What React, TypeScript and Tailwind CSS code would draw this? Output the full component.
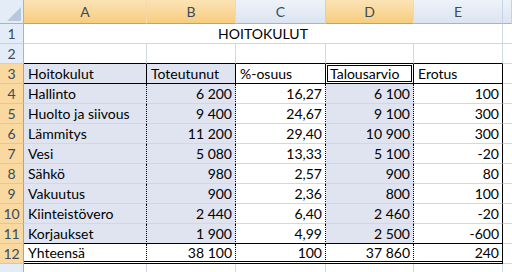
import React from 'react';

type Row = [string, string, string, string, string];

const rows: Row[] = [
  ['Hallinto', '6 200', '16,27', '6 100', '100'],
  ['Huolto ja siivous', '9 400', '24,67', '9 100', '300'],
  ['Lämmitys', '11 200', '29,40', '10 900', '300'],
  ['Vesi', '5 080', '13,33', '5 100', '-20'],
  ['Sähkö', '980', '2,57', '900', '80'],
  ['Vakuutus', '900', '2,36', '800', '100'],
  ['Kiinteistövero', '2 440', '6,40', '2 460', '-20'],
  ['Korjaukset', '1 900', '4,99', '2 500', '-600'],
];

const colHead = 'flex items-center justify-center border-r border-b border-r-[#c5d3e4] border-b-[#9eb6ce] bg-gradient-to-b from-[#eef3f9] to-[#dbe4f0] text-[#3b4a5c]';
const colHeadSel = 'flex items-center justify-center border-r border-b border-r-[#f5d9a8] border-b-[#f29436] bg-gradient-to-b from-[#fbe3b5] to-[#f7cd7e] text-[#3b4a5c]';
const rowHead = 'flex items-center justify-center border-r border-b border-r-[#9eb6ce] border-b-[#c5d3e4] bg-[#e4ecf7] text-[#3b4a5c]';
const rowHeadSel = 'flex items-center justify-center border-r border-b border-r-[#f29436] border-b-[#f3c47a] bg-[#f9d99f] text-[#3b4a5c]';

const App = () => {
  return (
    <div
      className="w-[512px] h-[272px] overflow-hidden bg-white text-[14px] leading-none text-black"
      style={{ fontFamily: 'Lato, "Open Sans", sans-serif' }}
    >
      <div className="grid grid-cols-[24px_123px_89px_90px_88px_89px_1fr] grid-rows-[24px_repeat(12,20px)_1fr] h-full">
        {/* column headers */}
        <div className="relative border-r border-b border-r-[#9eb6ce] border-b-[#9eb6ce] bg-[#e4ecf7]">
          <svg className="absolute right-[2px] bottom-[2px]" width="14" height="14" viewBox="0 0 14 14">
            <polygon points="14,0 14,14 0,14" fill="#b7c8dc" />
          </svg>
        </div>
        <div className={colHeadSel}>A</div>
        <div className={colHeadSel}>B</div>
        <div className={colHead}>C</div>
        <div className={colHeadSel}>D</div>
        <div className={colHead}>E</div>
        <div className={colHead}></div>

        {/* row 1 */}
        <div className={rowHead}>1</div>
        <div className="col-span-5 flex items-center justify-center border-r border-b border-[#d0d7e5]">HOITOKULUT</div>
        <div className="border-b border-[#d0d7e5]"></div>

        {/* row 2 */}
        <div className={rowHead}>2</div>
        <div className="border-r border-b border-r-[#d0d7e5] border-b-black"></div>
        <div className="border-r border-b border-r-[#d0d7e5] border-b-black"></div>
        <div className="border-r border-b border-r-[#d0d7e5] border-b-black"></div>
        <div className="border-r border-b border-r-[#d0d7e5] border-b-black"></div>
        <div className="border-r border-b border-r-[#d0d7e5] border-b-black"></div>
        <div className="border-b border-[#d0d7e5]"></div>

        {/* row 3 */}
        <div className={rowHeadSel}>3</div>
        <div className="flex items-center px-[4px] border-r border-b border-black bg-[#dfe4f0]">Hoitokulut</div>
        <div className="flex items-center px-[4px] border-r border-b border-black bg-[#dfe4f0]">Toteutunut</div>
        <div className="flex items-center px-[4px] border-r border-b border-black">%-osuus</div>
        <div className="flex items-center px-[4px] border-r border-b border-black shadow-[inset_0_0_0_1px_white,inset_0_0_0_2px_black]">Talousarvio</div>
        <div className="flex items-center px-[4px] border-r border-b border-black">Erotus</div>
        <div className="border-b border-[#d0d7e5]"></div>

        {/* rows 4-11 */}
        {rows.map((r, i) => {
          const last = i === rows.length - 1;
          const bb = last ? 'border-b-black' : 'border-b-[#d0d7e5]';
          return (
            <React.Fragment key={r[0]}>
              <div className={rowHeadSel}>{i + 4}</div>
              <div className={`flex items-center px-[4px] border-r border-b border-r-black [border-right-style:dotted] bg-[#dfe4f0] ${bb}`}>{r[0]}</div>
              <div className={`flex items-center justify-end px-[3px] border-r border-b border-r-black [border-right-style:dotted] bg-[#dfe4f0] ${bb}`}>{r[1]}</div>
              <div className={`flex items-center justify-end px-[3px] border-r border-b border-r-black [border-right-style:dotted] ${bb}`}>{r[2]}</div>
              <div className={`flex items-center justify-end px-[3px] border-r border-b border-r-black [border-right-style:dotted] bg-[#dfe4f0] ${bb}`}>{r[3]}</div>
              <div className={`flex items-center justify-end px-[3px] border-r border-b border-r-black ${bb}`}>{r[4]}</div>
              <div className="border-b border-[#d0d7e5]"></div>
            </React.Fragment>
          );
        })}

        {/* row 12 */}
        <div className={rowHeadSel}>12</div>
        <div className="flex items-center px-[4px] border-r border-b-[3px] border-r-black [border-right-style:dotted] border-b-black [border-bottom-style:double]">Yhteensä</div>
        <div className="flex items-center justify-end px-[3px] border-r border-b-[3px] border-r-black [border-right-style:dotted] border-b-black [border-bottom-style:double]">38 100</div>
        <div className="flex items-center justify-end px-[3px] border-r border-b-[3px] border-r-black [border-right-style:dotted] border-b-black [border-bottom-style:double]">100</div>
        <div className="flex items-center justify-end px-[3px] border-r border-b-[3px] border-r-black [border-right-style:dotted] border-b-black [border-bottom-style:double]">37 860</div>
        <div className="flex items-center justify-end px-[3px] border-r border-b-[3px] border-r-black border-b-black [border-bottom-style:double]">240</div>
        <div className="border-b border-[#d0d7e5]"></div>

        {/* row 13 (partial) */}
        <div className="border-r border-r-[#9eb6ce] bg-[#e4ecf7]"></div>
        <div className="border-r border-[#d0d7e5]"></div>
        <div className="border-r border-[#d0d7e5]"></div>
        <div className="border-r border-[#d0d7e5]"></div>
        <div className="border-r border-[#d0d7e5]"></div>
        <div className="border-r border-[#d0d7e5]"></div>
        <div></div>
      </div>
    </div>
  );
};

export default App;
